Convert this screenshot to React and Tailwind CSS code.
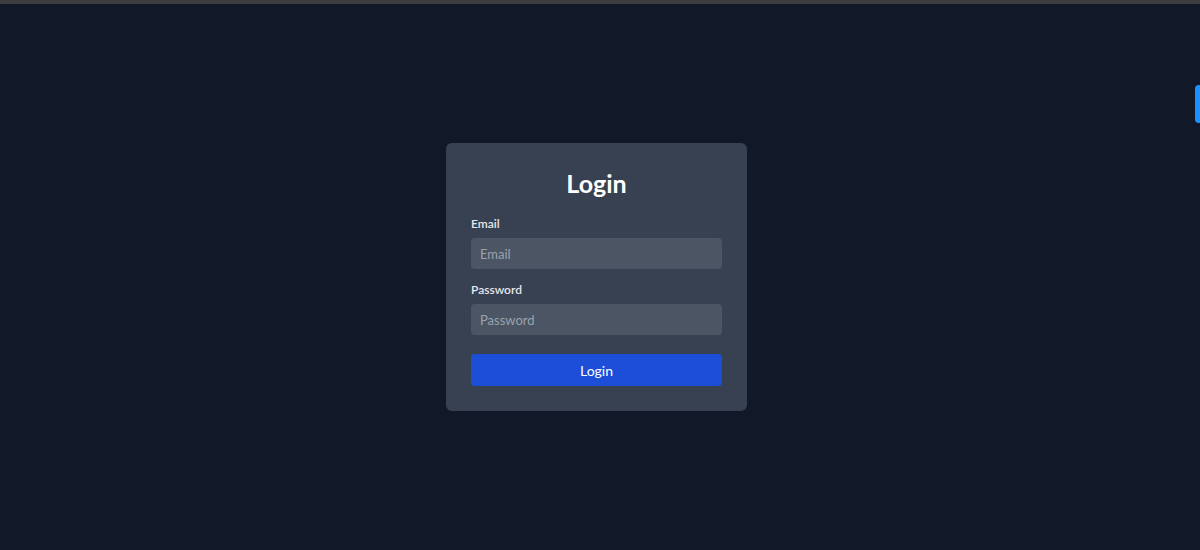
import React, { useState } from 'react'

const App = () => {
    const [values, setValues] = useState({ email: '', password: '' })

    const handleChange = (e) => {
        setValues({ ...values, [e.target.name]: e.target.value })
    }

    return (
        <div className="relative min-h-[550px] bg-[#111827] font-['Lato','Noto_Sans',sans-serif]">
            <div className="h-[4px] bg-[#3c3c3c]" />
            <div className="absolute right-0 top-[85px] h-[38px] w-[5px] rounded-l-[4px] bg-[#1e8fff]" />
            <div className="flex h-[546px] items-center justify-center pr-[7px]">
                <form
                    className="flex w-[301px] flex-col rounded-[6px] bg-[#374151] px-[25px] pt-[25px] pb-[25px]"
                    onSubmit={(e) => e.preventDefault()}
                >
                    <h1 className="mb-[18px] text-center text-[25px] leading-[30px] font-bold text-white">
                        Login
                    </h1>
                    <label className="mb-[6px] text-[12px] leading-[16px] font-semibold text-[#e5e7eb]">
                        Email
                    </label>
                    <input
                        type="email"
                        name="email"
                        placeholder="Email"
                        value={values.email}
                        onChange={handleChange}
                        className="mb-[13px] h-[31px] rounded-[4px] bg-[#4b5563] px-[9px] text-[13px] text-white placeholder:text-[#9ca3af] outline-none"
                    />
                    <label className="mb-[6px] text-[12px] leading-[16px] font-semibold text-[#e5e7eb]">
                        Password
                    </label>
                    <input
                        type="password"
                        name="password"
                        placeholder="Password"
                        value={values.password}
                        onChange={handleChange}
                        className="mb-[19px] h-[31px] rounded-[4px] bg-[#4b5563] px-[9px] text-[13px] text-white placeholder:text-[#9ca3af] outline-none"
                    />
                    <button
                        type="submit"
                        className="h-[32px] rounded-[4px] bg-[#1d4ed8] text-[14px] text-white"
                    >
                        Login
                    </button>
                </form>
            </div>
        </div>
    )
}

export default App
